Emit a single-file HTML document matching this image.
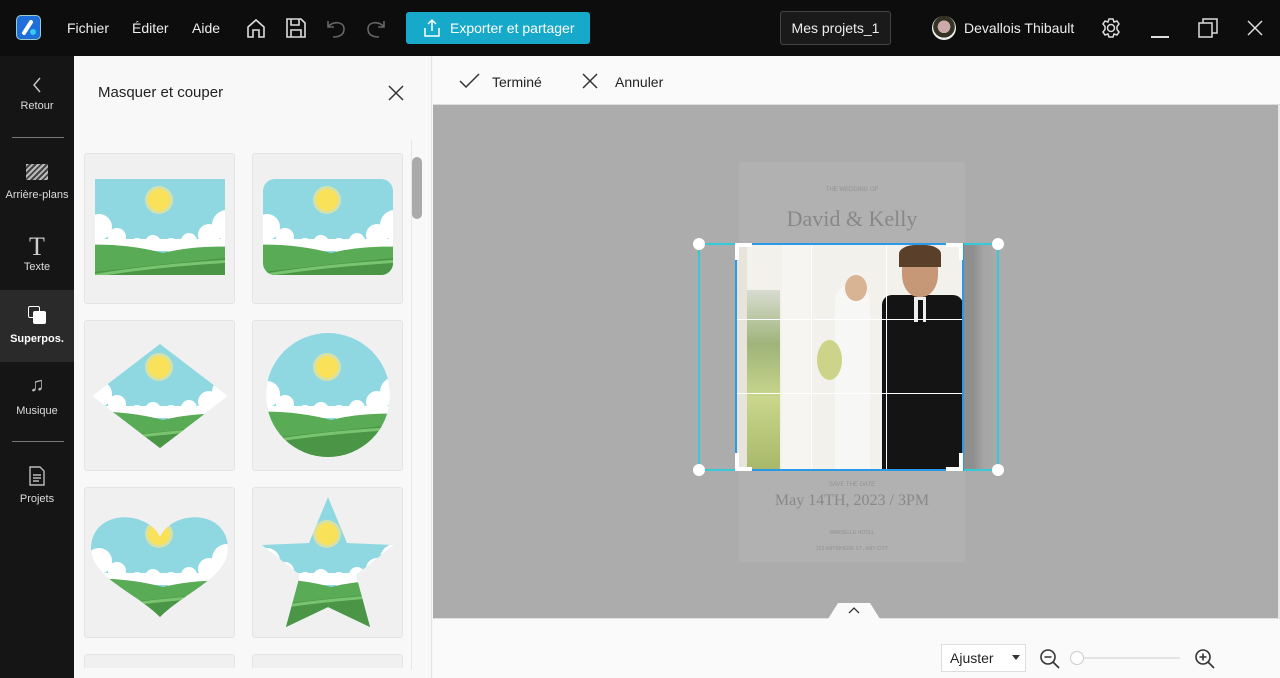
<!DOCTYPE html>
<html style="height:678px;overflow:hidden"><head><meta charset="utf-8"><style>
*{margin:0;padding:0;box-sizing:border-box}
body{width:1280px;height:678px;overflow:hidden;position:relative;background:#f7f7f7;font-family:"Liberation Sans",sans-serif}
.abs{position:absolute}
.top{left:0;top:0;width:1280px;height:56px;background:#0d0d0d;color:#eee;font-size:14px}
.side{left:0;top:56px;width:74px;height:622px;background:#151515;color:#ddd;font-size:11px;text-align:center}
.side .lbl{position:absolute;left:0;width:74px;text-align:center}
.sep{position:absolute;left:12px;width:52px;height:1px;background:#777}
.card{position:absolute;width:151px;height:151px;background:#f0f0f0;border:1px solid #e4e4e4;border-radius:3px}
svg{position:absolute}
</style></head><body>
<div class="abs top">
  <div class="abs" style="left:16px;top:15px;width:25px;height:25px;border-radius:5px;background:#1e6fd9;border:1px solid #9cc"></div>
  <svg style="left:16px;top:15px" width="25" height="25"><path d="M8,18 L15,7" stroke="#fff" stroke-width="4" stroke-linecap="round"/><circle cx="17" cy="17" r="3" fill="#3ce"/></svg>
  <div class="abs" style="left:67px;top:20px">Fichier</div>
  <div class="abs" style="left:132px;top:20px">Éditer</div>
  <div class="abs" style="left:192px;top:20px">Aide</div>
  <svg style="left:245px;top:17px" width="22" height="22" fill="none" stroke="#ddd" stroke-width="1.6"><path d="M3,10 L11,3 L19,10 L19,20 L14,20 L14,13 L8,13 L8,20 L3,20Z"/></svg>
  <svg style="left:285px;top:17px" width="22" height="22" fill="none" stroke="#ddd" stroke-width="1.6"><path d="M2,2 H16 L20,6 V20 H2Z M6,2 V8 H14 V2 M6,20 V13 H16 V20"/></svg>
  <svg style="left:325px;top:17px" width="22" height="22" fill="none" stroke="#666" stroke-width="1.6"><path d="M3,4 V10 H9 M3,10 C7,4 19,4 19,12 C19,18 14,20 8,20"/></svg>
  <svg style="left:365px;top:17px" width="22" height="22" fill="none" stroke="#666" stroke-width="1.6"><path d="M19,4 V10 H13 M19,10 C15,4 3,4 3,12 C3,18 8,20 14,20"/></svg>
  <div class="abs" style="left:406px;top:12px;width:184px;height:32px;background:#17a9c9;border-radius:3px;color:#fff;font-size:14px;line-height:32px;padding-left:44px">Exporter et partager</div>
  <svg style="left:422px;top:18px" width="20" height="20" fill="none" stroke="#fff" stroke-width="1.5"><path d="M10,2 V13 M6,6 L10,2 L14,6 M3,10 V18 H17 V10"/></svg>
  <div class="abs" style="left:780px;top:11px;width:111px;height:34px;border:1px solid #444;border-radius:3px;background:#1a1a1a;line-height:32px;text-align:center">Mes projets_1</div>
  <div class="abs" style="left:932px;top:16px;width:24px;height:24px;border-radius:50%;background:radial-gradient(circle at 50% 45%,#caa 0 35%,#332 36% 60%,#eee 61%)"></div>
  <div class="abs" style="left:964px;top:20px">Devallois Thibault</div>
  <svg style="left:1100px;top:17px" width="22" height="22" fill="none" stroke="#ddd" stroke-width="1.5"><circle cx="11" cy="11" r="3.5"/><path d="M9,2 H13 L14,5 L17,4 L19,7 L17,9.5 L17,12.5 L19,15 L17,18 L14,17 L13,20 H9 L8,17 L5,18 L3,15 L5,12.5 L5,9.5 L3,7 L5,4 L8,5Z"/></svg>
  <div class="abs" style="left:1151px;top:36px;width:18px;height:1.5px;background:#ddd"></div>
  <svg style="left:1197px;top:17px" width="22" height="22" fill="none" stroke="#ddd" stroke-width="1.5"><rect x="2" y="6" width="13" height="14"/><path d="M6,6 V2 H20 V16 H15"/></svg>
  <svg style="left:1246px;top:19px" width="18" height="18" stroke="#ddd" stroke-width="1.5"><path d="M2,2 L16,16 M16,2 L2,16"/></svg>
</div>

<div class="abs side">
  <svg style="left:30px;top:20px" width="14" height="18" fill="none" stroke="#ccc" stroke-width="1.4"><path d="M10,2 L4,9 L10,16"/></svg>
  <div class="lbl" style="top:44px">Retour</div>
  <div class="sep" style="top:81px"></div>
  <div class="abs" style="left:26px;top:108px;width:22px;height:16px;background:repeating-linear-gradient(135deg,#bbb 0 2px,#444 2px 4px)"></div>
  <div class="lbl" style="top:133px;font-size:11px">Arrière-plans</div>
  <div class="abs" style="left:0;top:176px;width:74px;font-family:'Liberation Serif',serif;font-size:26px;color:#ccc;text-align:center">T</div>
  <div class="lbl" style="top:205px">Texte</div>
  <div class="abs" style="left:0;top:234px;width:74px;height:72px;background:#2a2a2a"></div>
  <div class="abs" style="left:28px;top:250px;width:12px;height:12px;border:1.5px solid #fff;border-radius:2px"></div>
  <div class="abs" style="left:33px;top:255px;width:13px;height:13px;background:#fff;border-radius:2px"></div>
  <div class="lbl" style="top:277px;color:#fff;font-weight:bold">Superpos.</div>
  <div class="abs" style="left:0;top:318px;width:74px;font-size:20px;color:#bbb;text-align:center">♫</div>
  <div class="lbl" style="top:349px">Musique</div>
  <div class="sep" style="top:385px"></div>
  <svg style="left:28px;top:410px" width="18" height="20" fill="none" stroke="#bbb" stroke-width="1.4"><path d="M2,1 H12 L16,5 V19 H2Z M5,9 H13 M5,12 H13 M5,15 H11"/></svg>
  <div class="lbl" style="top:437px">Projets</div>
</div>

<!-- panel -->
<div class="abs" style="left:74px;top:56px;width:358px;height:622px;background:#f8f8f8;border-right:1px solid #e4e4e4"></div>
<div class="abs" style="left:98px;top:84px;font-size:15px;color:#222">Masquer et couper</div>
<svg style="left:388px;top:85px" width="16" height="16" stroke="#333" stroke-width="1.5"><path d="M1,1 L15,15 M15,1 L1,15"/></svg>
<div class="abs" style="left:411px;top:140px;width:1px;height:530px;background:#e6e6e6"></div>
<div class="abs" style="left:412px;top:157px;width:10px;height:62px;background:#aaa;border-radius:5px"></div>

<div class="card" style="left:84px;top:153px"></div>
<div class="card" style="left:252px;top:153px"></div>
<div class="card" style="left:84px;top:320px"></div>
<div class="card" style="left:252px;top:320px"></div>
<div class="card" style="left:84px;top:487px"></div>
<div class="card" style="left:252px;top:487px"></div>
<div class="card" style="left:84px;top:654px;height:14px;border-bottom:none;border-radius:3px 3px 0 0"></div>
<div class="card" style="left:252px;top:654px;height:14px;border-bottom:none;border-radius:3px 3px 0 0"></div>

<svg style="left:0;top:0" width="432" height="678">
<defs>
<g id="sc">
<rect width="150" height="150" fill="#8fd8e2"/>
<circle cx="74" cy="47" r="14" fill="#f4e58f" opacity=".7"/>
<circle cx="74" cy="47" r="11" fill="#f9e15a"/>
<g fill="#fff"><circle cx="14" cy="74" r="13"/><circle cx="32" cy="84" r="9"/><circle cx="52" cy="92" r="7"/><circle cx="68" cy="90" r="8"/><circle cx="86" cy="92" r="7"/><circle cx="104" cy="88" r="8"/><circle cx="124" cy="82" r="11"/><circle cx="142" cy="72" r="15"/><rect x="0" y="86" width="150" height="12"/></g>
<path d="M0,92 Q40,90 78,100 Q110,92 150,94 L150,150 L0,150Z" fill="#5aab55"/>
<path d="M0,120 Q70,112 150,104 L150,150 L0,150Z" fill="#4b9646"/>
<path d="M0,124 Q70,112 150,108" stroke="#79c46f" stroke-width="3" fill="none"/>
</g>
<clipPath id="c1"><rect x="10" y="26" width="130" height="96"/></clipPath>
<clipPath id="c2"><rect x="10" y="26" width="130" height="96" rx="12"/></clipPath>
<clipPath id="c3"><polygon points="75,24 143,76 75,128 7,76"/></clipPath>
<clipPath id="c4"><circle cx="75" cy="75" r="62"/></clipPath>
<clipPath id="c5"><path d="M75,50 C62,22 6,22 6,62 C6,90 50,105 75,130 C100,105 143,90 143,62 C143,22 88,22 75,50Z"/></clipPath>
<clipPath id="c6"><polygon points="75,10 94,56 141,58 103,88 117,140 75,120 33,140 47,88 9,58 56,56"/></clipPath>
</defs>
<g transform="translate(85,153)" clip-path="url(#c1)"><use href="#sc"/></g>
<g transform="translate(253,153)" clip-path="url(#c2)"><use href="#sc"/></g>
<g transform="translate(85,320)" clip-path="url(#c3)"><use href="#sc"/></g>
<g transform="translate(253,320)" clip-path="url(#c4)"><use href="#sc"/></g>
<g transform="translate(85,487)" clip-path="url(#c5)"><use href="#sc"/></g>
<g transform="translate(253,487)" clip-path="url(#c6)"><use href="#sc"/></g>
</svg>

<!-- canvas area -->
<div class="abs" style="left:433px;top:56px;width:847px;height:49px;background:#fafafa;border-bottom:1px solid #ddd"></div>
<svg style="left:459px;top:72px" width="22" height="18" fill="none" stroke="#333" stroke-width="1.5"><path d="M1,9 L7,15 L20,2"/></svg>
<div class="abs" style="left:492px;top:74px;font-size:14px;color:#222">Terminé</div>
<svg style="left:582px;top:73px" width="16" height="16" stroke="#333" stroke-width="1.5"><path d="M1,1 L15,15 M15,1 L1,15"/></svg>
<div class="abs" style="left:615px;top:74px;font-size:14px;color:#222">Annuler</div>

<div class="abs" style="left:433px;top:105px;width:845px;height:513px;background:#acacac"></div>
<div class="abs" style="left:1278px;top:105px;width:2px;height:513px;background:#e8e8e8"></div>
<div class="abs" style="left:739px;top:162px;width:226px;height:400px;background:#b1b1b1;color:#929292;text-align:center;font-family:'Liberation Sans',sans-serif">
  <div style="position:absolute;top:25px;width:100%;font-size:6px">THE WEDDING OF</div>
  <div style="position:absolute;top:44px;width:100%;font-size:22px;font-family:'Liberation Serif',serif;color:#888">David &amp; Kelly</div>
  <div style="position:absolute;top:320px;width:100%;font-size:6px">SAVE THE DATE</div>
  <div style="position:absolute;top:330px;width:100%;font-size:16px;font-family:'Liberation Serif',serif;color:#888">May 14TH, 2023 / 3PM</div>
  <div style="position:absolute;top:368px;width:100%;font-size:5px">MARSELLE HOTEL</div>
  <div style="position:absolute;top:384px;width:100%;font-size:5px">123 ANYWHERE ST., ANY CITY</div>
</div>
<div class="abs" style="left:963px;top:245px;width:35px;height:225px;background:linear-gradient(90deg,#8f8f8f 0 30%,#a5a5a5 60%,#aaa)"></div>
<div class="abs" style="left:737px;top:245px;width:226px;height:224px;overflow:hidden;background:#f2f1ec">
  <div class="abs" style="left:10px;top:45px;width:33px;height:180px;background:linear-gradient(180deg,#d8dcd0,#9fb47a 30%,#c9d68c 60%,#a8b86a)"></div>
  <div class="abs" style="left:0;top:0;width:10px;height:224px;background:#e8e4dc"></div>
  <div class="abs" style="left:45px;top:0;width:28px;height:224px;background:#f6f5f1"></div>
  <div class="abs" style="left:98px;top:40px;width:35px;height:184px;background:#f7f7f5;border-radius:15px 15px 0 0"></div>
  <div class="abs" style="left:108px;top:30px;width:22px;height:26px;background:#d8b494;border-radius:50%"></div>
  <div class="abs" style="left:80px;top:95px;width:25px;height:40px;background:#cdd48a;border-radius:50%"></div>
  <div class="abs" style="left:145px;top:50px;width:81px;height:174px;background:#141414;border-radius:10px 10px 0 0"></div>
  <div class="abs" style="left:165px;top:2px;width:36px;height:50px;background:#c79877;border-radius:45%"></div>
  <div class="abs" style="left:162px;top:0;width:42px;height:22px;background:#5a3f2a;border-radius:40% 40% 0 0"></div>
  <div class="abs" style="left:177px;top:52px;width:12px;height:25px;background:#eee"></div>
  <div class="abs" style="left:181px;top:55px;width:5px;height:25px;background:#111"></div>
</div>
<div class="abs" style="left:811px;top:245px;width:1px;height:224px;background:#fff"></div>
<div class="abs" style="left:886px;top:245px;width:1px;height:224px;background:#fff"></div>
<div class="abs" style="left:737px;top:319px;width:226px;height:1px;background:#fff"></div>
<div class="abs" style="left:737px;top:393px;width:226px;height:1px;background:#fff"></div>
<div class="abs" style="left:698px;top:243px;width:301px;height:228px;border:2px solid #36c9d8"></div>
<div class="abs" style="left:735px;top:243px;width:229px;height:228px;border:2px solid #2a9ae8"></div>
<svg style="left:690px;top:235px" width="320" height="245">
<g fill="#fff"><circle cx="9" cy="9" r="6"/><circle cx="308" cy="9" r="6"/><circle cx="9" cy="235" r="6"/><circle cx="308" cy="235" r="6"/></g>
<g fill="none" stroke="#fff" stroke-width="4"><path d="M47,25 V10 H62"/><path d="M256,10 H271 V25"/><path d="M47,218 V234 H62"/><path d="M256,234 H271 V218"/></g>
</svg>

<div class="abs" style="left:433px;top:618px;width:847px;height:60px;background:#fafafa;border-top:1px solid #e0e0e0"></div>
<svg style="left:828px;top:601px" width="52" height="18"><path d="M0,18 L10,2 H42 L52,18Z" fill="#fafafa"/><path d="M21,12 L26,7 L31,12" stroke="#333" fill="none" stroke-width="1.3"/></svg>
<div class="abs" style="left:941px;top:644px;width:85px;height:28px;border:1px solid #ddd;background:#fff;font-size:14px;color:#222;line-height:27px;padding-left:8px">Ajuster</div>
<div class="abs" style="left:1012px;top:655px;width:0;height:0;border-left:4px solid transparent;border-right:4px solid transparent;border-top:5px solid #333"></div>
<svg style="left:1038px;top:647px" width="24" height="24" fill="none" stroke="#333" stroke-width="1.6"><circle cx="10" cy="10" r="7"/><path d="M15,15 L21,21 M6.5,10 H13.5"/></svg>
<div class="abs" style="left:1080px;top:657px;width:100px;height:2px;background:#e4e4e4"></div>
<div class="abs" style="left:1070px;top:651px;width:14px;height:14px;border:1px solid #ccc;border-radius:50%;background:#fff"></div>
<svg style="left:1193px;top:647px" width="24" height="24" fill="none" stroke="#333" stroke-width="1.6"><circle cx="10" cy="10" r="7"/><path d="M15,15 L21,21 M6.5,10 H13.5 M10,6.5 V13.5"/></svg>
</body></html>
